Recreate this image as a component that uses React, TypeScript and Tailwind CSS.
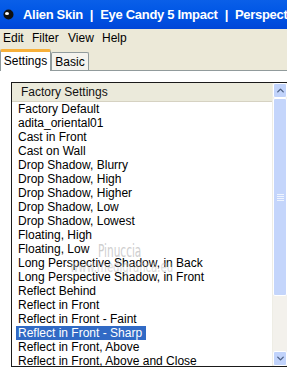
import { ChevronUp, ChevronDown } from 'lucide-react';

const presets = [
  'Factory Default',
  'adita_oriental01',
  'Cast in Front',
  'Cast on Wall',
  'Drop Shadow, Blurry',
  'Drop Shadow, High',
  'Drop Shadow, Higher',
  'Drop Shadow, Low',
  'Drop Shadow, Lowest',
  'Floating, High',
  'Floating, Low',
  'Long Perspective Shadow, in Back',
  'Long Perspective Shadow, in Front',
  'Reflect Behind',
  'Reflect in Front',
  'Reflect in Front - Faint',
  'Reflect in Front - Sharp',
  'Reflect in Front, Above',
  'Reflect in Front, Above and Close',
];

const selected = 'Reflect in Front - Sharp';

export default function App() {
  return (
    <div className="w-[287px] h-[370px] overflow-hidden bg-white font-['Liberation_Sans',Arial,sans-serif] text-black">
      {/* title bar */}
      <div className="h-[29px] flex items-center gap-[7px] pl-[3px] bg-gradient-to-b from-[#0a5fe8] via-[#0055e5] to-[#0046d8] whitespace-nowrap overflow-hidden text-white font-bold text-[13px] tracking-[-0.3px]">
        <svg width="11" height="11" viewBox="0 0 11 11" className="shrink-0 mr-[2px]">
          <circle cx="5.5" cy="5.5" r="5" fill="#111" />
          <ellipse cx="4" cy="4.5" rx="2" ry="1.6" fill="#fff" />
        </svg>
        <span>Alien Skin</span>
        <span>|</span>
        <span>Eye Candy 5 Impact</span>
        <span>|</span>
        <span>Perspective Shadow</span>
      </div>

      {/* menu */}
      <div className="h-[18px] flex items-center bg-[#ece9d8] text-[12px] pl-[3px]">
        <span className="w-[29px]">Edit</span>
        <span className="w-[36px]">Filter</span>
        <span className="w-[34px]">View</span>
        <span>Help</span>
      </div>

      {/* tabs */}
      <div className="h-[24px] bg-[#ece9d8] flex items-end relative">
        <div className="absolute left-0 right-0 bottom-0 h-px bg-[#919b9c]" />
        <div className="relative z-10 w-[51px] h-[22px] bg-white border border-b-0 border-[#919b9c] border-t-[3px] border-t-[#f7b03a] rounded-t-[2px] flex items-center justify-center text-[12px] pb-[2px]">
          Settings
        </div>
        <div className="w-[38px] h-[18px] mb-px bg-[#f4f3ee] border border-b-0 border-[#919b9c] rounded-t-[2px] flex items-center justify-center text-[12px]">
          Basic
        </div>
      </div>

      {/* panel */}
      <div className="pl-[11px] pt-[11px]">
        <div className="w-[280px] h-[285px] border border-[#1a1a1a] border-r-0 flex relative">
          <div className="flex-1 min-w-0 overflow-hidden flex flex-col">
            <div className="h-[19px] bg-[#ebeadb] border-b border-[#d6d2c2] flex items-center pl-[9px] text-[12px] text-[#111]">
              Factory Settings
            </div>
            <div className="flex flex-col">
              {presets.map((p) => (
                <div key={p} className="h-[14px] flex items-center pl-[6px] text-[12px] leading-[14px] whitespace-nowrap">
                  <span className={p === selected ? 'bg-[#316ac5] text-white px-[2px] -mx-[2px] pr-[4px]' : 'px-[2px] -mx-[2px]'}>{p}</span>
                </div>
              ))}
            </div>
          </div>

          {/* scrollbar */}
          <div className="w-[15px] shrink-0 mr-[4px] flex flex-col bg-[#f3f1ec] border-l border-[#eeede5]">
            <div className="h-[15px] bg-[#c1d3fb] border border-white rounded-[2px] flex items-center justify-center">
              <ChevronUp size={11} strokeWidth={3} className="text-[#4d6185]" />
            </div>
            <div className="h-[198px] bg-[#c4d5fb] border border-white rounded-[2px] flex items-center justify-center">
              <div className="flex flex-col gap-[1px]">
                <div className="w-[7px] h-px bg-[#eef4fe]" />
                <div className="w-[7px] h-px bg-[#eef4fe]" />
                <div className="w-[7px] h-px bg-[#eef4fe]" />
                <div className="w-[7px] h-px bg-[#eef4fe]" />
              </div>
            </div>
            <div className="flex-1" />
            <div className="h-[15px] bg-[#c1d3fb] border border-white rounded-[2px] flex items-center justify-center">
              <ChevronDown size={11} strokeWidth={3} className="text-[#4d6185]" />
            </div>
          </div>

          {/* watermark */}
          <div className="absolute left-[86px] top-[159px] text-[18px] leading-[18px] text-[#b0b0b0] opacity-60 font-['DejaVu_Sans_Condensed',sans-serif] scale-x-[0.65] origin-left pointer-events-none">
            Pinuccia
          </div>
          <div className="absolute left-[58px] top-[176px] text-[15px] leading-[16px] text-[#bdbdbd] opacity-50 font-['DejaVu_Sans_Condensed',sans-serif] scale-x-[0.75] origin-left pointer-events-none">
            www.medigrafica.eu
          </div>
        </div>
      </div>
    </div>
  );
}
